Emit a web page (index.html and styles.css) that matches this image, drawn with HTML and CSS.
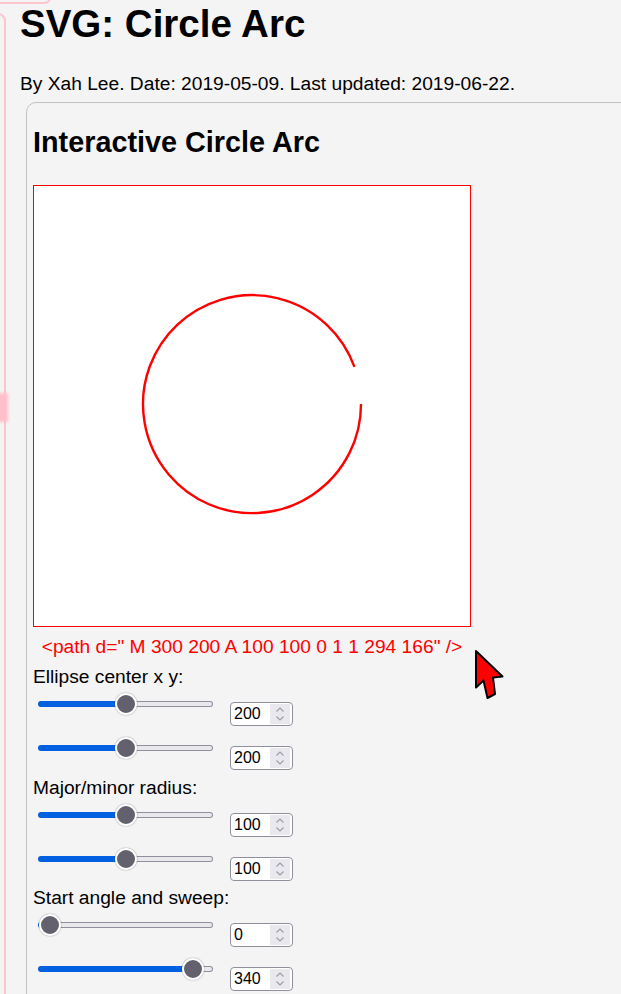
FILE: index.html
```html
<!DOCTYPE html>
<html lang="en">
<head>
<meta charset="utf-8">
<title>SVG: Circle Arc</title>
<link rel="stylesheet" href="styles.css">
</head>
<body>
<div class="nav-top"></div>
<div class="nav-side"></div>
<div class="nav-tab"></div>

<main class="page">
  <h1 class="title">SVG: Circle Arc</h1>
  <p class="byline">By Xah Lee. Date: 2019-05-09. Last updated: 2019-06-22.</p>

  <section class="panel">
    <h2 class="panel-title">Interactive Circle Arc</h2>

    <div class="stage">
      <svg class="canvas" width="436" height="440" viewBox="0 0 400 403.67">
        <path d="M 300 200 A 100 100 0 1 1 294 166" fill="none" stroke="#ff0000" stroke-width="2.2"/>
      </svg>
      <p class="code">&lt;path d=" M 300 200 A 100 100 0 1 1 294 166" /&gt;</p>
    </div>

    <div class="controls">
      <div class="group">
        <div class="label">Ellipse center x y:</div>
        <div class="row">
          <input class="slider" type="range" min="0" max="400" value="200" style="--f:0.5">
          <span class="num"><input type="number" value="200"><span class="spin"><svg width="20" height="20" viewBox="0 0 20 20"><path d="M6.5 7.5 L10 4 L13.5 7.5 M6.5 12.5 L10 16 L13.5 12.5" fill="none" stroke="#9a9aa5" stroke-width="1.1"/></svg></span></span>
        </div>
        <div class="row">
          <input class="slider" type="range" min="0" max="400" value="200" style="--f:0.5">
          <span class="num"><input type="number" value="200"><span class="spin"><svg width="20" height="20" viewBox="0 0 20 20"><path d="M6.5 7.5 L10 4 L13.5 7.5 M6.5 12.5 L10 16 L13.5 12.5" fill="none" stroke="#9a9aa5" stroke-width="1.1"/></svg></span></span>
        </div>
      </div>

      <div class="group">
        <div class="label">Major/minor radius:</div>
        <div class="row">
          <input class="slider" type="range" min="0" max="200" value="100" style="--f:0.5">
          <span class="num"><input type="number" value="100"><span class="spin"><svg width="20" height="20" viewBox="0 0 20 20"><path d="M6.5 7.5 L10 4 L13.5 7.5 M6.5 12.5 L10 16 L13.5 12.5" fill="none" stroke="#9a9aa5" stroke-width="1.1"/></svg></span></span>
        </div>
        <div class="row">
          <input class="slider" type="range" min="0" max="200" value="100" style="--f:0.5">
          <span class="num"><input type="number" value="100"><span class="spin"><svg width="20" height="20" viewBox="0 0 20 20"><path d="M6.5 7.5 L10 4 L13.5 7.5 M6.5 12.5 L10 16 L13.5 12.5" fill="none" stroke="#9a9aa5" stroke-width="1.1"/></svg></span></span>
        </div>
      </div>

      <div class="group">
        <div class="label">Start angle and sweep:</div>
        <div class="row">
          <input class="slider" type="range" min="0" max="360" value="0" style="--f:0">
          <span class="num"><input type="number" value="0"><span class="spin"><svg width="20" height="20" viewBox="0 0 20 20"><path d="M6.5 7.5 L10 4 L13.5 7.5 M6.5 12.5 L10 16 L13.5 12.5" fill="none" stroke="#9a9aa5" stroke-width="1.1"/></svg></span></span>
        </div>
        <div class="row">
          <input class="slider" type="range" min="0" max="360" value="340" style="--f:0.9444">
          <span class="num"><input type="number" value="340"><span class="spin"><svg width="20" height="20" viewBox="0 0 20 20"><path d="M6.5 7.5 L10 4 L13.5 7.5 M6.5 12.5 L10 16 L13.5 12.5" fill="none" stroke="#9a9aa5" stroke-width="1.1"/></svg></span></span>
        </div>
      </div>
    </div>
  </section>
</main>

<svg class="pointer" width="34" height="54" viewBox="0 0 34 54">
  <polygon points="2,2 28.5,27.5 19,28.5 21,45 13.5,49 9.5,31.5 2,38.5" fill="#ff0000" stroke="#000" stroke-width="2" stroke-linejoin="round"/>
</svg>
</body>
</html>
```

FILE: styles.css
```css
html, body {
  margin: 0;
  padding: 0;
  background: #f4f4f4;
  overflow: hidden;
}

body {
  font-family: "Liberation Sans", Arial, sans-serif;
  color: #000;
  height: 994px;
  position: relative;
}

/* side navigation frames peeking in from the left edge */
.nav-top {
  position: fixed;
  left: -20px;
  top: -40px;
  width: 72px;
  height: 44px;
  box-sizing: border-box;
  border: 2px solid #ffc3cd;
  border-radius: 8px;
}

.nav-side {
  position: fixed;
  left: -100px;
  top: 13px;
  width: 106px;
  height: 1100px;
  box-sizing: border-box;
  border: 2px solid #ffc3cd;
  border-radius: 8px;
}

.nav-tab {
  position: fixed;
  left: -4px;
  top: 393px;
  width: 12px;
  height: 29px;
  background: #ffbfca;
  filter: blur(1.5px);
}

.page {
  padding-left: 20px;
}

.title {
  margin: 3px 0 0;
  font-size: 38.5px;
  line-height: 42px;
  font-weight: bold;
}

.byline {
  margin: 28px 0 0;
  font-size: 19.2px;
  line-height: 22px;
}

.panel {
  margin: 7px 0 0 6px;
  width: 700px;
  height: 1000px;
  border: 1px solid #c2c2c2;
  border-radius: 10px;
  padding: 0 6px;
}

.panel-title {
  margin: 23px 0 0;
  font-size: 28.8px;
  line-height: 33px;
  font-weight: bold;
}

.stage {
  margin-top: 26px;
  width: 438px;
}

.canvas {
  display: block;
  background: #fff;
  border: 1px solid #ff0000;
}

.code {
  margin: 9px 0 0;
  color: #ff0000;
  font-size: 19.2px;
  line-height: 22px;
  text-align: center;
}

.controls {
  margin-top: 8px;
}

.group {
  display: flex;
  flex-direction: column;
}

.label {
  font-size: 19.2px;
  line-height: 22px;
}

.row {
  display: flex;
  align-items: flex-start;
  height: 44.3px;
}

/* range control */
.slider {
  -webkit-appearance: none;
  appearance: none;
  width: 175px;
  height: 22px;
  margin: 5px 0 0 5px;
  padding: 0;
  background: transparent;
}

.slider::-webkit-slider-runnable-track {
  box-sizing: border-box;
  height: 6px;
  border-radius: 3px;
  border: 1px solid transparent;
  background:
    linear-gradient(to right, #0060df calc(11px + var(--f) * 153px), transparent 0) border-box,
    linear-gradient(#e9e9ed, #e9e9ed) padding-box,
    linear-gradient(#8f8f9d, #8f8f9d) border-box;
}

.slider::-webkit-slider-thumb {
  -webkit-appearance: none;
  appearance: none;
  box-sizing: border-box;
  width: 22px;
  height: 22px;
  margin-top: -9px;
  border-radius: 50%;
  background: #62616d;
  border: 2px solid #fff;
  box-shadow: 0 0 1.5px rgba(0, 0, 0, 0.45);
}

/* number field with its stepper */
.num {
  display: inline-flex;
  align-items: center;
  box-sizing: border-box;
  width: 63px;
  height: 24px;
  margin: 14px 0 0 17px;
  border: 1px solid #8f8f9d;
  border-radius: 4px;
  background: #fff;
}

.num input {
  -moz-appearance: textfield;
  appearance: textfield;
  width: 36px;
  border: 0;
  padding: 0 0 0 3px;
  margin: 0;
  background: transparent;
  font-family: "Liberation Sans", Arial, sans-serif;
  font-size: 16px;
  color: #000;
  outline: none;
}

.num input::-webkit-inner-spin-button,
.num input::-webkit-outer-spin-button {
  -webkit-appearance: none;
  margin: 0;
}

.spin {
  margin-left: auto;
  margin-right: 2px;
  width: 20px;
  height: 20px;
  background: #e9e9ed;
}

.spin svg {
  display: block;
}

/* mouse pointer resting beside the canvas */
.pointer {
  position: absolute;
  left: 474px;
  top: 649px;
}
```
